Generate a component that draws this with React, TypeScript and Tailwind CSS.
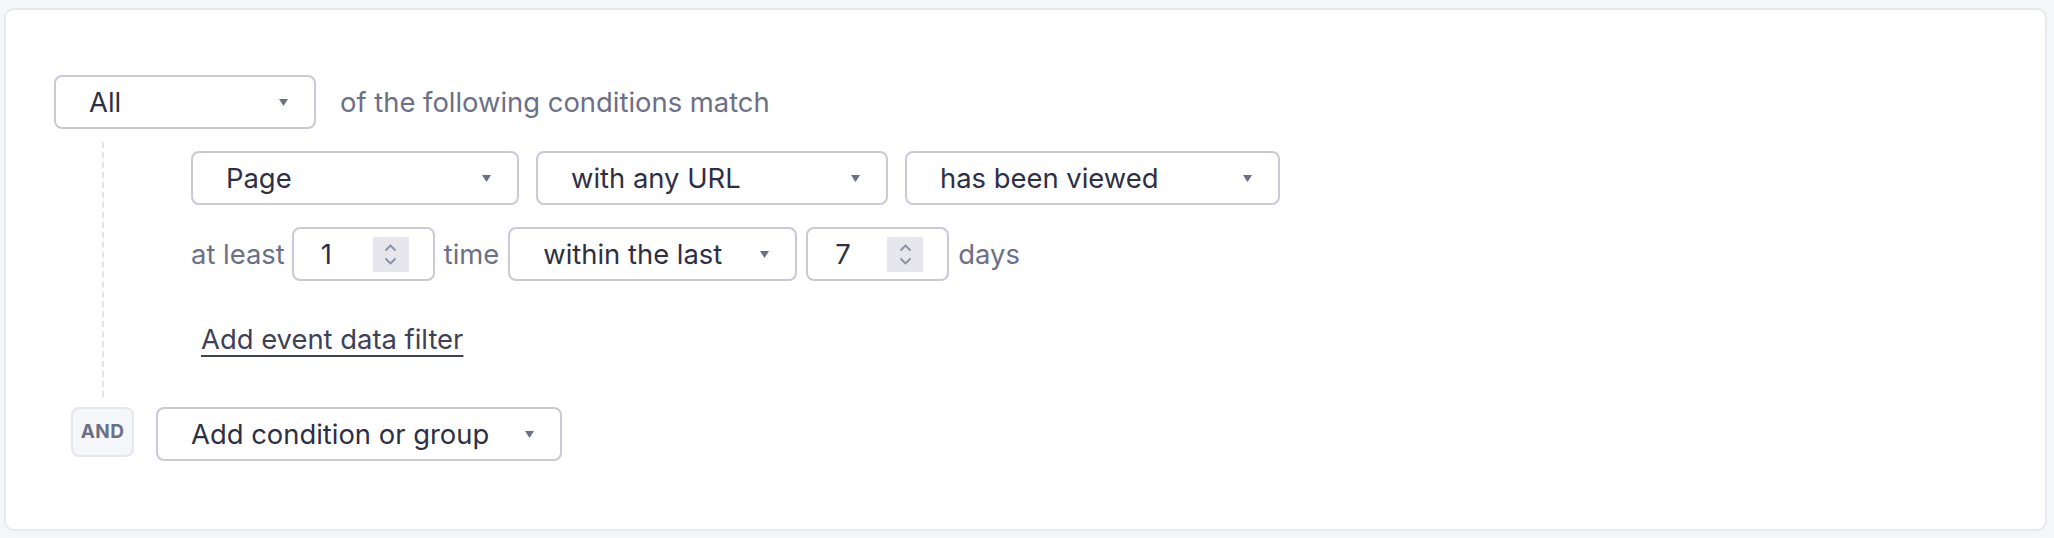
import React from "react";

function Caret() {
  return (
    <svg width="9" height="7" viewBox="0 0 9 7" className="shrink-0">
      <path d="M0 0h9L4.5 7z" fill="#6b7085" />
    </svg>
  );
}

function Select({ label, width }: { label: string; width: string }) {
  return (
    <div
      className={`${width} flex h-[54px] shrink-0 items-center justify-between rounded-[8px] border-2 border-[#c9cad6] bg-white pl-[33px] pr-[26px] text-[#2e2f45]`}
    >
      <span>{label}</span>
      <Caret />
    </div>
  );
}

function NumberInput({ value }: { value: string }) {
  return (
    <div className="flex h-[54px] w-[143px] shrink-0 items-center justify-between rounded-[8px] border-2 border-[#c9cad6] bg-white pl-[27px] pr-[24px] text-[#2e2f45]">
      <span>{value}</span>
      <div className="flex h-[35px] w-[36px] flex-col items-center justify-center gap-[5px] bg-[#e6e6ec]">
        <svg width="13" height="8" viewBox="0 0 13 8">
          <path d="M1.5 6.5l5-5 5 5" fill="none" stroke="#8a8ea0" strokeWidth="1.8" />
        </svg>
        <svg width="13" height="8" viewBox="0 0 13 8">
          <path d="M1.5 1.5l5 5 5-5" fill="none" stroke="#8a8ea0" strokeWidth="1.8" />
        </svg>
      </div>
    </div>
  );
}

export default function App() {
  return (
    <div className="min-h-screen bg-[#f5f6f8] pb-[7px] pl-[4px] pr-[7px] pt-[8px] font-[Inter,sans-serif] text-[27.4px] leading-[34px]">
      <div className="h-[523px] rounded-[10px] border-2 border-[#e8e9ee] bg-white pl-[48px] pt-[65px]">
        <div className="flex items-center gap-[24px]">
          <Select label="All" width="w-[262px]" />
          <span className="text-[#6b7088]">of the following conditions match</span>
        </div>

        <div className="mt-[13px] flex">
          <div className="ml-[48px] h-[255px] w-0 border-l-2 border-dashed border-[#e3e4e9]" />
          <div className="ml-[87px] mt-[9px] flex flex-col">
            <div className="flex gap-[17px]">
              <Select label="Page" width="w-[328px]" />
              <Select label="with any URL" width="w-[352px]" />
              <Select label="has been viewed" width="w-[375px]" />
            </div>
            <div className="mt-[22px] flex items-center gap-[9px]">
              <span className="mr-[-2px] text-[#6b7088]">at least</span>
              <NumberInput value="1" />
              <span className="text-[#6b7088]">time</span>
              <Select label="within the last" width="w-[289px]" />
              <NumberInput value="7" />
              <span className="text-[#6b7088]">days</span>
            </div>
            <a className="ml-[10px] mt-[41px] w-fit text-[#3e4057] underline decoration-2 underline-offset-[6px]">
              Add event data filter
            </a>
          </div>
        </div>

        <div className="ml-[17px] mt-[10px] flex items-start gap-[22px]">
          <div className="flex h-[50px] w-[63px] items-center justify-center rounded-[8px] border-2 border-[#e6e7ec] bg-[#f5f6f9] text-[19px] font-bold tracking-[0.4px] text-[#6b7085]">
            AND
          </div>
          <Select label="Add condition or group" width="w-[406px]" />
        </div>
      </div>
    </div>
  );
}
